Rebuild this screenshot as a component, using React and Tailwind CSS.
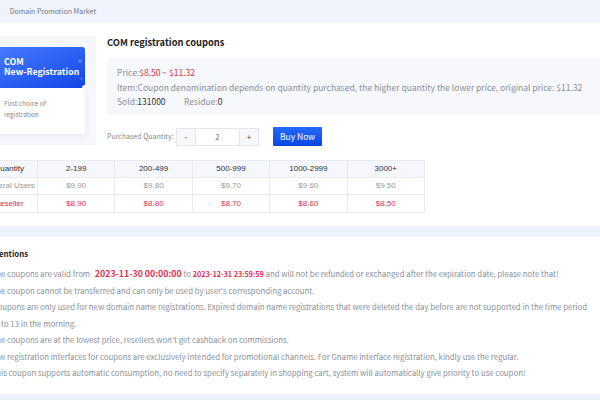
import React from 'react';

const tiers = ['2-199', '200-499', '500-999', '1000-2999', '3000+'];
const general = ['$9.90', '$9.80', '$9.70', '$9.60', '$9.50'];
const reseller = ['$8.90', '$8.80', '$8.70', '$8.60', '$8.50'];

const notes = [
  "2.The coupon cannot be transferred and can only be used by user's corresponding account.",
  '3.Coupons are only used for new domain name registrations. Expired domain name registrations that were deleted the day before are not supported in the time period',
  'of 3 to 13 in the morning.',
  "4.The coupons are at the lowest price, resellers won't get cashback on commissions.",
  '5.The registration interfaces for coupons are exclusively intended for promotional channels. For Gname interface registration, kindly use the regular.',
  '6.This coupon supports automatic consumption, no need to specify separately in shopping cart, system will automatically give priority to use coupon!',
];

const App = () => {
  return (
    <div className="w-[600px] h-[400px] overflow-hidden bg-white font-['Noto_Sans_CJK_SC',sans-serif] text-[#333]">
      {/* Breadcrumb */}
      <div className="h-[23px] bg-[#eff3fc] flex items-center">
        <span className="-ml-[3px] text-[9px] text-[#aab]">›</span>
        <span className="ml-[10px] text-[7px] text-[#777]">Domain Promotion Market</span>
      </div>

      {/* Product */}
      <div className="w-[680px] -ml-[20px] pt-[13px] pb-[13px]">
        <div className="flex">
          <div className="w-[116px] h-[109px] bg-[#f5f7fc] pt-[11px]">
            <div className="ml-[8px] w-[97px] h-[41px] rounded-tr-[3px] bg-gradient-to-br from-[#4a7dff] to-[#1244e8] relative pl-[16px] pt-[10px] text-white font-bold text-[8.8px] leading-[10px] whitespace-nowrap">
              <div>COM</div>
              <div>New-Registration</div>
              <span className="absolute right-[3px] top-[12px] w-[4px] h-[4px] rounded-full bg-white/20"></span>
              <span className="absolute right-[2px] top-[30px] w-[3px] h-[3px] rounded-full bg-white/15"></span>
              <span className="absolute -right-[3px] -bottom-[3px] w-[6px] h-[6px] rounded-full bg-[#f5f7fc]"></span>
            </div>
            <div className="ml-[8px] w-[97px] h-[46px] bg-white rounded-br-[3px] shadow-[0_2px_6px_rgba(60,90,180,0.08)] pl-[16px] pt-[10px] text-[6.5px] leading-[11px] text-[#888]">
              <div>First choice of</div>
              <div>registration</div>
            </div>
          </div>

          <div className="flex-1 ml-[11px]">
            <div className="h-[14px] flex items-center text-[9.3px] font-bold text-[#222]">COM registration coupons</div>
            <div className="mt-[8px] h-[57px] bg-[#f7f8fc] pl-[10px] pt-[7px] text-[8.5px] leading-[14.5px] text-[#8a8f99]">
              <div>Price:<span className="text-[#e2304c]">$8.50 ~ $11.32</span></div>
              <div>Item:Coupon denomination depends on quantity purchased, the higher quantity the lower price, original price: $11.32</div>
              <div className="flex">
                <span className="w-[67px]">Sold:<span className="text-[#333]">131000</span></span>
                <span>Residue:<span className="text-[#333]">0</span></span>
              </div>
            </div>
            <div className="mt-[12px] flex items-center h-[19px]">
              <span className="w-[69px] text-[7px] text-[#888]">Purchased Quantity:</span>
              <div className="flex h-[18px] border border-[#e3e6ee] text-[8px]">
                <button className="w-[19px] bg-[#f7f8fa] border-r border-[#e3e6ee] text-[#555]">-</button>
                <div className="w-[43px] flex items-center justify-center text-[#777] bg-white">2</div>
                <button className="w-[19px] bg-[#f7f8fa] border-l border-[#e3e6ee] text-[#444]">+</button>
              </div>
              <button className="ml-[14px] w-[49px] h-[19px] rounded-[1px] bg-gradient-to-b from-[#2369ff] to-[#0c45e6] text-white text-[8.5px]">Buy Now</button>
            </div>
          </div>
        </div>

        <table className="mt-[14px] border-collapse text-[8px] text-center font-['Liberation_Sans',sans-serif]">
          <tbody>
            <tr className="h-[17px] bg-[#f5f7fc] text-[#333]">
              <td className="w-[57px] border border-[#e8ebf2]">Quantity</td>
              {tiers.map((t) => (
                <td key={t} className="w-[77.4px] border border-[#e8ebf2]">{t}</td>
              ))}
            </tr>
            <tr className="h-[17px] text-[#999]">
              <td className="border border-[#e8ebf2]">General Users</td>
              {general.map((p, i) => (
                <td key={i} className="border border-[#e8ebf2]">{p}</td>
              ))}
            </tr>
            <tr className="h-[18px] text-[#e2304c]">
              <td className="border border-[#e8ebf2]">Reseller</td>
              {reseller.map((p, i) => (
                <td key={i} className="border border-[#e8ebf2]">{p}</td>
              ))}
            </tr>
          </tbody>
        </table>
      </div>

      <div className="h-[11px] bg-[#eef2fa]"></div>

      {/* Attentions */}
      <div className="-ml-[14px] w-[680px] pt-[10px] h-[157px]">
        <div className="ml-[2px] h-[14px] flex items-center text-[7.8px] font-bold text-[#222]">Attentions</div>
        <div className="mt-[5px] text-[7.8px] leading-[16.5px] text-[#8a8f99] whitespace-nowrap">
          <div>
            1.The coupons are valid from <span className="ml-[3px] text-[8.8px] font-bold text-[#e2304c]">2023-11-30 00:00:00</span> to{' '}
            <span className="text-[7.2px] font-bold text-[#e2304c]">2023-12-31 23:59:59</span> and will not be refunded or exchanged after the expiration date, please note that!
          </div>
          {notes.map((n) => (
            <div key={n}>{n}</div>
          ))}
        </div>
      </div>
      <div className="h-[20px] bg-[#eef2fa]"></div>
    </div>
  );
};

export default App;
